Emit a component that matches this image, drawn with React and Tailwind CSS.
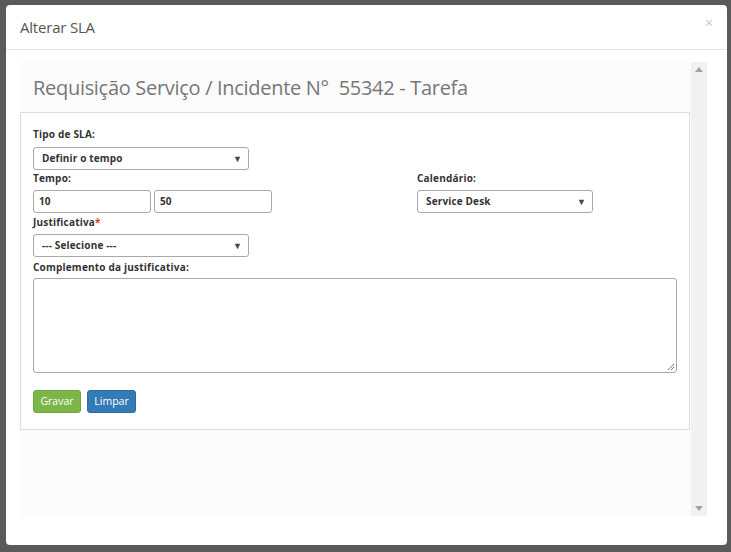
import React from "react";

const font = { fontFamily: '"Open Sans", "Noto Sans", sans-serif' };

function Select({ value, className }) {
  return (
    <div
      className={
        "flex items-center justify-between border border-[#a9a9a9] rounded-[3px] bg-white pl-[8px] pr-[6px] text-[10px] font-bold text-[#333] tracking-[0.15px] " +
        className
      }
    >
      <span>{value}</span>
      <span className="text-[9px] text-[#444]">▼</span>
    </div>
  );
}

function Label({ children }) {
  return <div className="text-[10px] font-bold text-[#333] leading-[14px] tracking-[0.2px]">{children}</div>;
}

export default function App() {
  return (
    <div className="w-[731px] h-[552px] bg-[#5a5a5a] overflow-hidden pt-[5px] pl-[6px]" style={font}>
      <div className="w-[721px] h-[540px] bg-white rounded-[4px] flex flex-col">
        <div className="h-[45px] border-b border-[#e5e5e5] flex items-center justify-between pl-[14px] pr-[14px]">
          <span className="text-[15px] text-[#555] tracking-[-0.2px]">Alterar SLA</span>
          <span className="text-[14px] text-[#c8c8c8] -mt-[10px]">×</span>
        </div>
        <div className="pt-[12px] pl-[14px] pr-[20px]">
          <div className="flex h-[454px]">
            <div className="flex-1 bg-[#fbfbfb] flex flex-col">
              <div className="h-[50px] flex items-center pl-[13px] pt-[2px]">
                <span className="text-[20px] text-[#777] tracking-[-0.3px] whitespace-pre">
                  Requisição Serviço / Incidente N°  55342 - Tarefa
                </span>
              </div>
              <div className="bg-white border border-[#ddd] mr-[1px] h-[318px] pl-[12px] pr-[12px] pt-[14px]">
                <Label>Tipo de SLA:</Label>
                <Select value="Definir o tempo" className="w-[216px] h-[23px] mt-[6px]" />
                <div className="flex mt-[1px]">
                  <div className="w-[384px]">
                    <Label>Tempo:</Label>
                    <div className="flex gap-[3px] mt-[5px]">
                      <div className="w-[118px] h-[23px] border border-[#a9a9a9] rounded-[3px] flex items-center pl-[5px] text-[10px] font-bold text-[#333]">10</div>
                      <div className="w-[118px] h-[23px] border border-[#a9a9a9] rounded-[3px] flex items-center pl-[5px] text-[10px] font-bold text-[#333]">50</div>
                    </div>
                  </div>
                  <div>
                    <Label>Calendário:</Label>
                    <Select value="Service Desk" className="w-[176px] h-[23px] mt-[5px]" />
                  </div>
                </div>
                <div className="mt-[2px]">
                  <Label>
                    Justificativa<span className="text-[#e53935]">*</span>
                  </Label>
                  <Select value="--- Selecione ---" className="w-[216px] h-[23px] mt-[5px]" />
                </div>
                <div className="mt-[3px]">
                  <Label>Complemento da justificativa:</Label>
                  <div className="relative w-[644px] h-[95px] border border-[#a9a9a9] rounded-[3px] mt-[4px]">
                    <svg className="absolute right-[1px] bottom-[1px]" width="9" height="9" viewBox="0 0 9 9">
                      <path d="M8 2 L2 8 M8 5 L5 8" stroke="#777" strokeWidth="1" />
                    </svg>
                  </div>
                </div>
                <div className="flex gap-[6px] mt-[17px]">
                  <div className="w-[48px] h-[23px] bg-[#7cb548] border border-[#6ea83d] rounded-[3px] text-white text-[10.5px] flex items-center justify-center">Gravar</div>
                  <div className="w-[49px] h-[23px] bg-[#337ab7] border border-[#2e6da4] rounded-[3px] text-white text-[10.5px] flex items-center justify-center">Limpar</div>
                </div>
              </div>
            </div>
            <div className="w-[17px] bg-[#f1f1f1] flex flex-col items-center justify-between py-[5px]">
              <svg width="8" height="5" viewBox="0 0 8 5"><path d="M0 5 L4 0 L8 5 Z" fill="#a3a3a3" /></svg>
              <svg width="8" height="5" viewBox="0 0 8 5"><path d="M0 0 L4 5 L8 0 Z" fill="#a3a3a3" /></svg>
            </div>
          </div>
        </div>
      </div>
    </div>
  );
}
